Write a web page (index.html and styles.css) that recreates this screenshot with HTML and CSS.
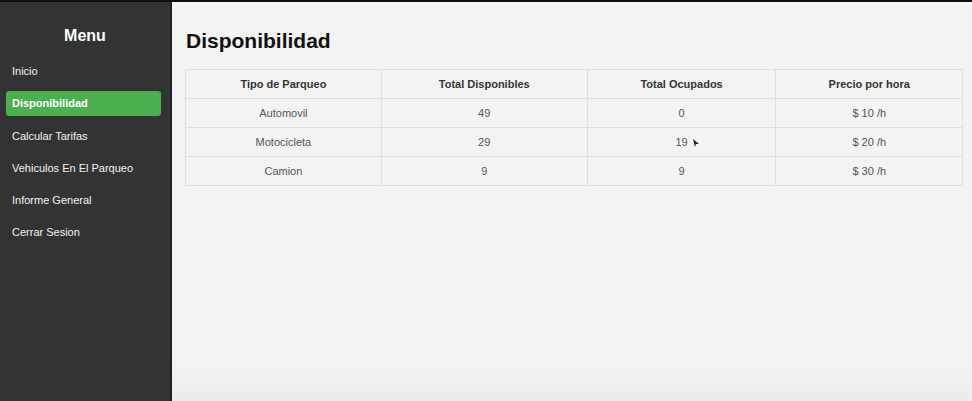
FILE: index.html
```html
<!DOCTYPE html>
<html lang="es">
<head>
<meta charset="utf-8">
<title>Disponibilidad</title>
<link rel="stylesheet" href="styles.css">
</head>
<body>
<div class="topbar"></div>
<div class="layout">
  <nav class="sidebar">
    <h2 class="menu-title">Menu</h2>
    <ul class="menu">
      <li class="menu-item">Inicio</li>
      <li class="menu-item active">Disponibilidad</li>
      <li class="menu-item">Calcular Tarifas</li>
      <li class="menu-item">Vehiculos En El Parqueo</li>
      <li class="menu-item">Informe General</li>
      <li class="menu-item">Cerrar Sesion</li>
    </ul>
  </nav>
  <main class="content">
    <h1 class="page-title">Disponibilidad</h1>
    <table class="grid">
      <colgroup>
        <col class="c1"><col class="c2"><col class="c3"><col class="c4">
      </colgroup>
      <thead>
        <tr><th>Tipo de Parqueo</th><th>Total Disponibles</th><th>Total Ocupados</th><th>Precio por hora</th></tr>
      </thead>
      <tbody>
        <tr><td>Automovil</td><td>49</td><td>0</td><td>$ 10 /h</td></tr>
        <tr><td>Motocicleta</td><td>29</td><td><span class="cursor-host">19<svg class="cursor" width="8" height="10" viewBox="0 0 8 10"><path d="M1 1 L7 6 L4 6 L3 9 Z" fill="#222"/></svg></span></td><td>$ 20 /h</td></tr>
        <tr><td>Camion</td><td>9</td><td>9</td><td>$ 30 /h</td></tr>
      </tbody>
    </table>
  </main>
</div>
</body>
</html>
```
FILE: styles.css
```css
* { box-sizing: border-box; }
html, body { margin: 0; padding: 0; }
body {
  width: 972px;
  height: 401px;
  overflow: hidden;
  font-family: "Liberation Sans", Arial, sans-serif;
  display: flex;
  flex-direction: column;
  background: #f2f2f2;
}
.topbar {
  height: 2px;
  background: #0d0d0d;
  flex: none;
}
.layout {
  flex: 1;
  display: flex;
  min-height: 0;
}
.sidebar {
  width: 172px;
  flex: none;
  background: #333333;
  border-right: 2px solid #222;
  padding-top: 25px;
}
.menu-title {
  margin: 0;
  font-size: 16px;
  line-height: 18px;
  font-weight: bold;
  color: #ffffff;
  text-align: center;
}
.menu {
  list-style: none;
  margin: 14px 0 0 0;
  padding: 0;
  display: flex;
  flex-direction: column;
  gap: 7.25px;
}
.menu-item {
  margin-left: 6px;
  width: 155px;
  height: 25px;
  line-height: 25px;
  padding-left: 6px;
  font-size: 11px;
  color: #f4f4f4;
  border-radius: 3px;
}
.menu-item.active {
  background: #4caf50;
  font-weight: bold;
  color: #ffffff;
}
.content {
  flex: 1;
  padding: 27px 9px 0 13px;
  background: linear-gradient(to bottom, #f3f3f3 0, #f3f3f3 360px, #ececec 100%);
}
.page-title {
  margin: 0 0 16px 0;
  padding-left: 1px;
  font-size: 21px;
  line-height: 24px;
  font-weight: bold;
  color: #111;
}
.grid {
  width: 100%;
  border-collapse: collapse;
  table-layout: fixed;
  font-size: 11px;
}
.c1 { width: 25.2%; }
.c2 { width: 26.5%; }
.c3 { width: 24.3%; }
.c4 { width: 24%; }
.grid th, .grid td {
  border: 1px solid #dedede;
  height: 29px;
  padding: 0 6px;
  text-align: center;
  vertical-align: middle;
}
.grid th {
  color: #333;
  font-weight: bold;
}
.grid td {
  color: #555;
}
.cursor-host {
  position: relative;
}
.cursor {
  position: absolute;
  left: 17px;
  top: 2px;
}
```
